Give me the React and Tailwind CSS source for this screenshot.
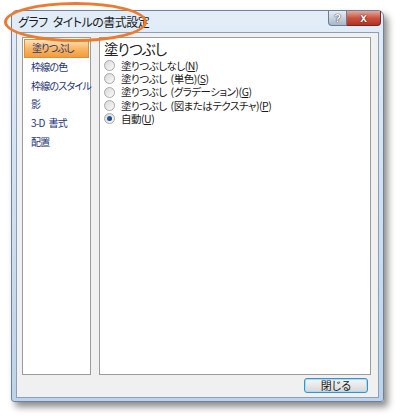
import React from "react";

const jp = { fontFamily: '"Noto Sans CJK JP", "Noto Sans", sans-serif', fontFeatureSettings: '"palt"' };

const tabs = [["塗りつぶし"], ["枠線の色"], ["枠線のスタイル"], ["影"], ["3-D", "書式"], ["配置"]];

const options = [
  { label: "塗りつぶしなし(", key: "N" },
  { label: "塗りつぶし", paren: "(単色)(", key: "S" },
  { label: "塗りつぶし", paren: "(グラデーション)(", key: "G" },
  { label: "塗りつぶし", paren: "(図またはテクスチャ)(", key: "P" },
  { label: "自動(", key: "U", checked: true },
];

function Radio({ checked }) {
  return (
    <span className="w-[11px] h-[11px] rounded-full border border-[#a8a8a8] bg-gradient-to-br from-[#d8d8d8] to-[#fbfbfb] flex items-center justify-center shrink-0">
      {checked && <span className="w-[5px] h-[5px] rounded-full bg-gradient-to-br from-[#2b69b8] to-[#113e7c]" />}
    </span>
  );
}

export default function App() {
  return (
    <div className="relative w-[400px] h-[418px] bg-white overflow-hidden" style={jp}>
      <div className="pt-[10px] pl-[11px]">
        {/* window */}
        <div className="w-[373px] h-[392px] rounded-t-[6px] rounded-b-[3px] border border-[#6f8299] bg-gradient-to-b from-[#e2edf8] via-[#cfe0f1] to-[#bcd3eb] shadow-[4px_5px_7px_rgba(0,0,0,0.45)] flex flex-col">
          {/* title bar */}
          <div className="h-[21px] flex items-start">
            <div className="pl-[6px] pt-[4px] text-[12px] leading-[14px] tracking-[-0.5px] text-[#1a1a1a] flex-1 flex">
              <span>グラフ</span>
              <span className="ml-[5px]">タイトルの書式設定</span>
            </div>
            <div className="flex mr-[2px]">
              <div className="w-[19px] h-[15px] rounded-bl-[4px] border border-t-0 border-[#6d7c90] bg-gradient-to-b from-[#e6ecf3] via-[#c9d3df] to-[#a9b7c9] flex items-center justify-center text-[11px] leading-none font-bold text-white" style={{ fontFamily: "Liberation Sans, sans-serif", textShadow: "0 0 1px #333, 0 0 1px #333" }}>?</div>
              <div className="w-[34px] h-[15px] rounded-br-[4px] border border-l-0 border-t-0 border-[#6b2a25] bg-gradient-to-b from-[#e3a89e] via-[#c9533f] to-[#b8301e] flex items-center justify-center text-[12px] leading-none font-bold text-white" style={{ fontFamily: "Liberation Sans, sans-serif", textShadow: "0 0 1px #300, 0 0 1px #300" }}>x</div>
            </div>
          </div>
          {/* client area */}
          <div className="flex-1 mx-[4px] mb-[3px] border border-[#8aa0b8] bg-[#f0f0f0] flex flex-col px-[5px] pt-[4px]">
            <div className="flex gap-[8px] h-[338px]">
              <div className="w-[69px] bg-white border border-[#9c9c9c] p-[1px] flex flex-col">
                {tabs.map((t, i) => (
                  <div
                    key={t[0]}
                    className={`h-[18.7px] flex items-center gap-[4px] pl-[7px] text-[10px] leading-[12px] tracking-[-0.8px] text-[#1e3478] whitespace-nowrap ${
                      i === 0 ? "bg-gradient-to-b from-[#fde2b4] via-[#f8b766] to-[#f59a3a] border border-[#d8903c] pl-[6px]" : ""
                    }`}
                  >
                    {t.map((p) => (
                      <span key={p}>{p}</span>
                    ))}
                  </div>
                ))}
              </div>
              <div className="flex-1 bg-white border border-[#9c9c9c] px-[4px] pt-[1px] mr-[2px]">
                <div className="text-[14.5px] leading-[20px] tracking-[-0.8px] text-[#222]">塗りつぶし</div>
                <div className="flex flex-col">
                  {options.map((o) => (
                    <div key={o.key} className="h-[13.3px] flex items-center gap-[6px] text-[10.5px] leading-[12px] tracking-[-0.5px] text-[#1a1a1a] whitespace-nowrap">
                      <Radio checked={o.checked} />
                      <span className="flex">
                        <span>{o.label}</span>
                        {o.paren && <span className="ml-[4px]">{o.paren}</span>}
                        <span className="underline">{o.key}</span>
                        <span>)</span>
                      </span>
                    </div>
                  ))}
                </div>
              </div>
            </div>
            <div className="flex justify-end pt-[3px] pr-[5px]">
              <div className="w-[64px] h-[15px] rounded-[3px] border border-[#3c8fd0] bg-gradient-to-b from-[#f4f4f4] via-[#e8e8e8] to-[#d6d6d6] shadow-[inset_0_0_0_1px_#a8dcf5] flex items-center justify-center text-[11px] leading-none text-[#1a1a1a]">
                閉じる
              </div>
            </div>
          </div>
        </div>
      </div>
      {/* orange highlight ellipse */}
      <div className="absolute left-[4px] top-[2px] w-[143px] h-[40px] rounded-[50%] border-[3px] border-[#ee7a2c]" />
    </div>
  );
}
